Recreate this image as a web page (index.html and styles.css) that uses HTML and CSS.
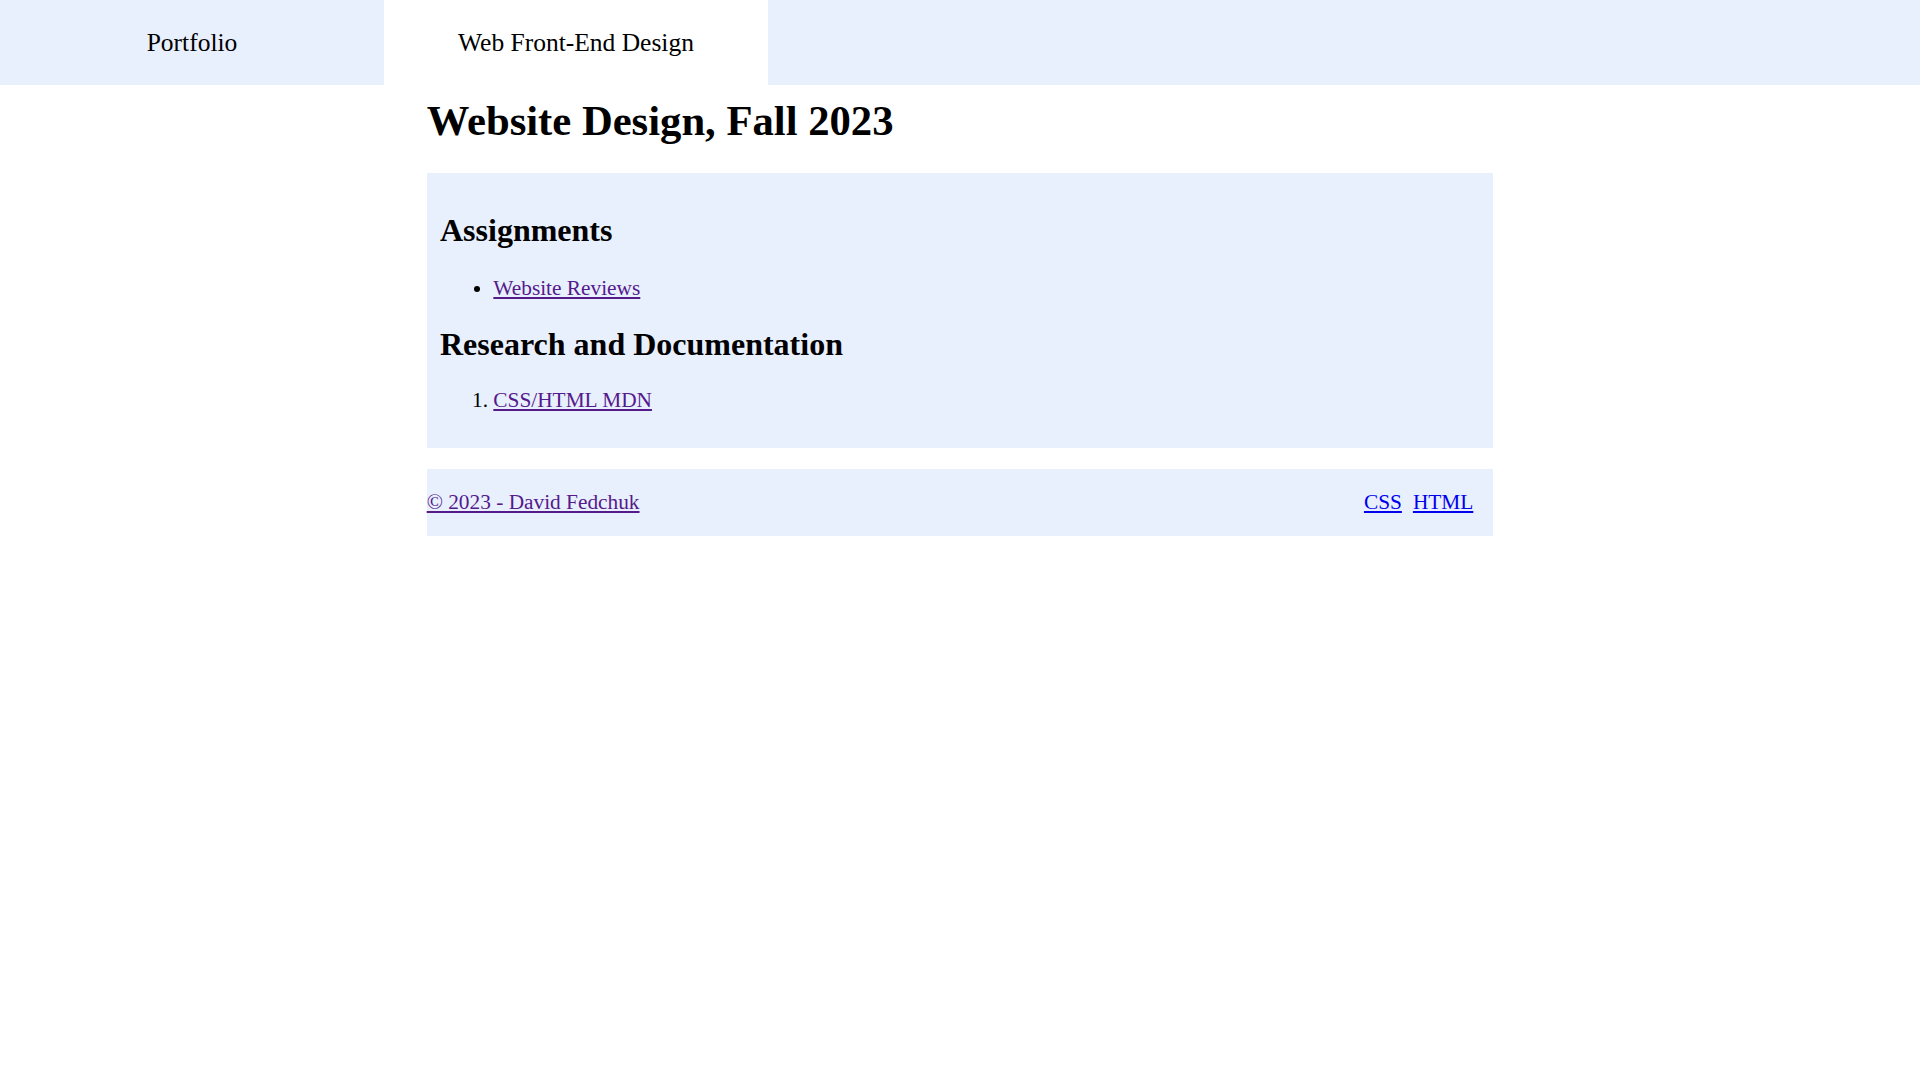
FILE: index.html
```html
<!DOCTYPE html>
<html lang="en">
<head>
<meta charset="utf-8">
<title>Website Design, Fall 2023</title>
<link rel="stylesheet" href="styles.css">
</head>
<body>
<nav class="topnav">
  <a class="tab" href="#">Portfolio</a>
  <a class="tab tab-active" href="#">Web Front-End Design</a>
</nav>
<main class="page">
  <h1 class="title">Website Design, Fall 2023</h1>
  <section class="panel">
    <h2 class="panel-heading">Assignments</h2>
    <ul class="panel-list panel-list-first">
      <li><a class="visited" href="#">Website Reviews</a></li>
    </ul>
    <h2 class="panel-heading">Research and Documentation</h2>
    <ol class="panel-list">
      <li><a class="visited" href="#">CSS/HTML MDN</a></li>
    </ol>
  </section>
  <footer class="footer">
    <a class="visited" href="#">© 2023 - David Fedchuk</a>
    <div class="footer-links">
      <a class="fresh" href="#">CSS</a>
      <a class="fresh" href="#">HTML</a>
    </div>
  </footer>
</main>
</body>
</html>
```
FILE: styles.css
```css
html, body {
  margin: 0;
  padding: 0;
  background: #ffffff;
}

body {
  font-family: "Liberation Serif", "Times New Roman", serif;
  font-size: 21.333px;
  line-height: 1.107;
  color: #000000;
}

.topnav {
  display: flex;
  height: 85px;
  background: #e8f0fe;
}

.tab {
  width: 384px;
  display: flex;
  align-items: center;
  justify-content: center;
  padding-top: 2px;
  box-sizing: border-box;
  font-size: 25.5px;
  color: #000000;
  text-decoration: none;
}

.tab-active {
  background: #ffffff;
}

.page {
  width: 1066.667px;
  margin: 0 auto;
}

.title {
  font-size: 42.667px;
  font-weight: bold;
  margin: 12px 0 28.6px 0;
}

.panel {
  background: #e8f0fe;
  padding: 13.333px 13.333px 13.5px 13.333px;
}

.panel-heading {
  font-size: 32px;
  font-weight: bold;
  margin: 26.56px 0;
}

.panel-list {
  margin: 21.333px 0;
  padding-left: 53.333px;
}

.panel-list-first {
  margin-top: 29px;
}

.visited {
  color: #551a8b;
}

.fresh {
  color: #0000ee;
}

.footer {
  margin-top: 21.333px;
  background: #e8f0fe;
  display: flex;
  justify-content: space-between;
  align-items: center;
  padding: 22px 20px 21.5px 0;
}

.footer-links {
  display: flex;
  gap: 11px;
}
```
